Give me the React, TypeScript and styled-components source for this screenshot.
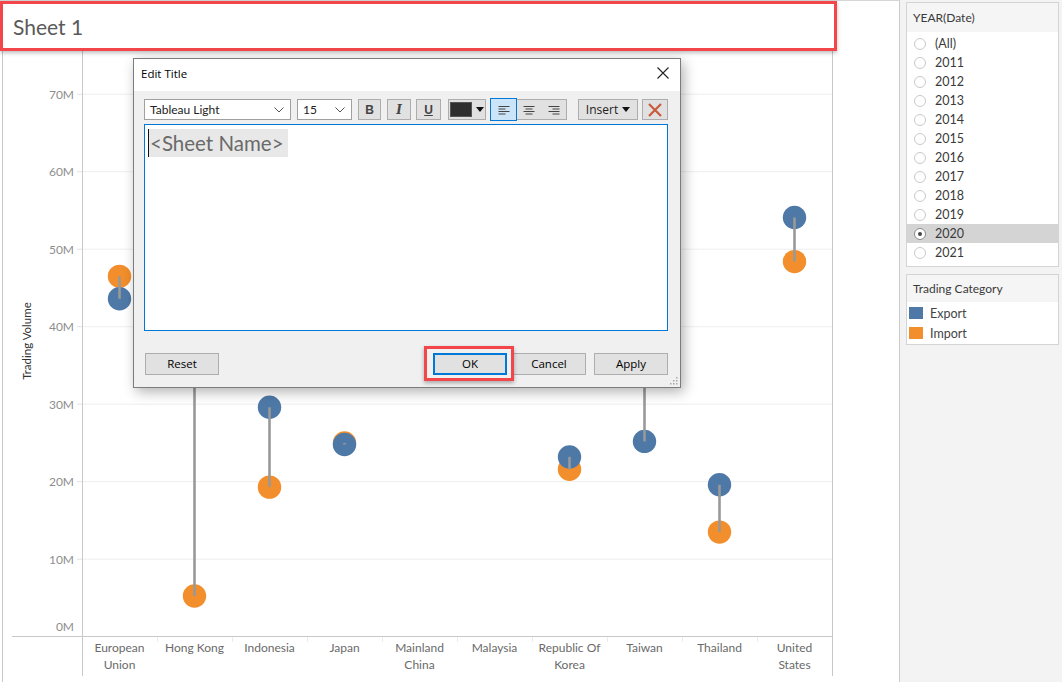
import React from 'react';
import styled, { createGlobalStyle } from 'styled-components';

const GlobalStyle = createGlobalStyle`
  html, body {
    margin: 0;
    padding: 0;
    width: 1062px;
    height: 682px;
    overflow: hidden;
    background: #ffffff;
  }
  body {
    font-family: Lato, "Open Sans", sans-serif;
    color: #333;
  }
  * { box-sizing: border-box; }
`;

const Page = styled.div`
  position: relative;
  display: flex;
  width: 1062px;
  height: 682px;
`;

const Worksheet = styled.div`
  flex: none;
  width: 900px;
  height: 682px;
  display: flex;
  flex-direction: column;
  background: #fff;
  border-top: 1px solid #d6d6d6;
  border-right: 1px solid #cbcbcb;
`;

const TitleRow = styled.div`
  flex: none;
  height: 50px;
`;

const TitleBox = styled.div`
  width: 837px;
  height: 50px;
  border: 3px solid #f2464b;
  background: #fff;
  display: flex;
  align-items: center;
  padding-left: 10px;
  box-shadow: 0 2px 4px rgba(0, 0, 0, 0.25);
  font-family: Lato, sans-serif;
  font-size: 21px;
  color: #5a5a5a;
  position: relative;
  z-index: 1;
`;

const ChartSvg = styled.svg`
  display: block;
  flex: none;
  font-family: Lato, sans-serif;
`;

const SidePanel = styled.div`
  flex: 1;
  background: #f3f3f3;
  padding: 2px 3px 0 6px;
  display: flex;
  flex-direction: column;
  gap: 7px;
`;

const Card = styled.div`
  background: #fff;
  border: 1px solid #d4d4d4;
  display: flex;
  flex-direction: column;
`;

const CardHeader = styled.div<{ $h: number }>`
  height: ${(p) => p.$h}px;
  line-height: ${(p) => p.$h}px;
  background: #f5f5f5;
  padding-left: 6px;
  font-size: 12px;
  color: #3a3a3a;
`;

const List = styled.div<{ $pt: number; $pb: number }>`
  padding: ${(p) => p.$pt}px 0 ${(p) => p.$pb}px;
  display: flex;
  flex-direction: column;
`;

const RadioRow = styled.div<{ $active?: boolean }>`
  height: 19px;
  display: flex;
  align-items: center;
  gap: 9px;
  padding-left: 7px;
  font-size: 12.5px;
  color: #3a3a3a;
  background: ${(p) => (p.$active ? '#d4d4d4' : 'transparent')};
`;

const Radio = styled.span<{ $checked?: boolean }>`
  width: 12px;
  height: 12px;
  border-radius: 50%;
  border: 1px solid ${(p) => (p.$checked ? '#8a8a8a' : '#c9c9c9')};
  background: #fff;
  display: flex;
  align-items: center;
  justify-content: center;
  &::after {
    content: '';
    width: 4px;
    height: 4px;
    border-radius: 50%;
    background: ${(p) => (p.$checked ? '#444' : 'transparent')};
  }
`;

const LegendRow = styled.div`
  height: 20px;
  display: flex;
  align-items: center;
  gap: 7px;
  padding-left: 2px;
  font-size: 12.5px;
  color: #444;
`;

const Swatch = styled.span<{ $color: string }>`
  width: 14px;
  height: 12px;
  background: ${(p) => p.$color};
`;

/* ---------- Dialog ---------- */

const Dialog = styled.div`
  position: absolute;
  left: 133px;
  top: 58px;
  width: 548px;
  height: 330px;
  border: 1px solid #7c7c7c;
  background: #f0f0f0;
  box-shadow: 3px 4px 12px rgba(0, 0, 0, 0.3);
  display: flex;
  flex-direction: column;
  font-family: "Open Sans", "Noto Sans", sans-serif;
  z-index: 2;
`;

const DialogTitleBar = styled.div`
  height: 32px;
  flex: none;
  background: #fff;
  display: flex;
  align-items: center;
  justify-content: space-between;
  padding: 0 11px 4px 7px;
  font-size: 11.5px;
  color: #000;
`;

const DialogBody = styled.div`
  flex: 1;
  display: flex;
  flex-direction: column;
  padding: 8px 12px 0 10px;
`;

const Toolbar = styled.div`
  display: flex;
  height: 21px;
`;

const Select = styled.div<{ $w: number; $ml?: number }>`
  width: ${(p) => p.$w}px;
  margin-left: ${(p) => p.$ml ?? 0}px;
  height: 21px;
  background: #fff;
  border: 1px solid #a0a0a0;
  display: flex;
  align-items: center;
  justify-content: space-between;
  padding: 0 6px 0 5px;
  font-family: Lato, sans-serif;
  font-size: 12px;
  color: #222;
`;

const ToolButton = styled.div<{ $w: number; $ml?: number }>`
  width: ${(p) => p.$w}px;
  margin-left: ${(p) => p.$ml ?? 0}px;
  height: 21px;
  background: #e1e1e1;
  border: 1px solid #adadad;
  display: flex;
  align-items: center;
  justify-content: center;
  gap: 4px;
  font-size: 12px;
  color: #222;
`;

const StyleGlyph = styled.span<{ $kind: 'b' | 'i' | 'u' }>`
  font-family: ${(p) => (p.$kind === 'i' ? '"DejaVu Serif", serif' : '"Liberation Sans", sans-serif')};
  font-weight: bold;
  font-style: ${(p) => (p.$kind === 'i' ? 'italic' : 'normal')};
  text-decoration: ${(p) => (p.$kind === 'u' ? 'underline' : 'none')};
  font-size: 12px;
  color: #444;
`;

const ColorSwatch = styled.span`
  width: 22px;
  height: 15px;
  background: #2e2e2e;
  border: 1px solid #555;
`;

const AlignGroup = styled.div`
  margin-left: 5px;
  width: 76px;
  height: 21px;
  display: flex;
  background: #e1e1e1;
  border: 1px solid #adadad;
`;

const AlignButton = styled.div<{ $active?: boolean }>`
  flex: 1;
  display: flex;
  align-items: center;
  justify-content: center;
  background: ${(p) => (p.$active ? '#cce4f7' : 'transparent')};
  outline: ${(p) => (p.$active ? '1px solid #0078d7' : 'none')};
  margin: ${(p) => (p.$active ? '-1px 0 -1px -1px' : '0')};
  position: relative;
`;

const TextArea = styled.div`
  margin-top: 4px;
  height: 207px;
  background: #fff;
  border: 1px solid #0078d7;
  padding: 4px 0 0 3px;
`;

const Placeholder = styled.span`
  display: inline-block;
  height: 28px;
  line-height: 28px;
  padding: 0 4px 0 1px;
  background: #e8e8e8;
  border-left: 1px solid #111;
  font-family: Lato, sans-serif;
  font-size: 20.5px;
  color: #6a6a6a;
`;

const Footer = styled.div`
  display: flex;
  align-items: center;
  margin-top: 22px;
  padding-left: 1px;
`;

const DialogButton = styled.div<{ $primary?: boolean; $ml?: number }>`
  width: 74px;
  height: 22px;
  margin-left: ${(p) => p.$ml ?? 0}px;
  background: #e1e1e1;
  border: ${(p) => (p.$primary ? '2px solid #0078d7' : '1px solid #adadad')};
  display: flex;
  align-items: center;
  justify-content: center;
  padding-bottom: 1px;
  font-size: 11.5px;
  color: #000;
`;

const Spacer = styled.div`
  flex: 1;
`;

const Highlighted = styled.div`
  position: relative;
`;

const HighlightRing = styled.div`
  position: absolute;
  left: -9px;
  right: -7px;
  top: -7px;
  bottom: -6px;
  border: 3px solid #f2464b;
  box-shadow: 0 2px 4px rgba(0, 0, 0, 0.3);
  pointer-events: none;
`;

const Grip = styled.svg`
  position: absolute;
  right: 2px;
  bottom: 2px;
`;

/* ---------- icons ---------- */

const Chevron = () => (
  <svg width="10" height="6" viewBox="0 0 10 6">
    <path d="M0.5 0.5 L5 5 L9.5 0.5" fill="none" stroke="#555" strokeWidth="1" />
  </svg>
);

const Caret = () => (
  <svg width="8" height="5" viewBox="0 0 8 5">
    <path d="M0 0 H8 L4 5 Z" fill="#111" />
  </svg>
);

const AlignIcon = ({ mode }: { mode: 'l' | 'c' | 'r' }) => {
  const rows = [11, 7, 11, 7];
  return (
    <svg width="12" height="10" viewBox="0 0 12 10">
      {rows.map((w, i) => {
        const x = mode === 'l' ? 0.5 : mode === 'r' ? 11.5 - w : (12 - w) / 2;
        return <rect key={i} x={x} y={1 + i * 2.5} width={w} height={1} fill="#444" />;
      })}
    </svg>
  );
};

const CloseIcon = () => (
  <svg width="12" height="12" viewBox="0 0 12 12">
    <path d="M0.5 0.5 L11.5 11.5 M11.5 0.5 L0.5 11.5" stroke="#222" strokeWidth="1.1" />
  </svg>
);

const RedX = () => (
  <svg width="14" height="14" viewBox="0 0 14 14">
    <path d="M1 1 L13 13 M13 1 L1 13" stroke="#c95a3c" strokeWidth="2.2" />
  </svg>
);

/* ---------- chart ---------- */

const OY = 51;
const yv = (v: number) => 636.7 - 7.75 * v - OY;
const colX = (i: number) => 82 + 75 * i + 37.5;

const countries: { name: string[]; exp: number; imp: number }[] = [
  { name: ['European', 'Union'], exp: 43.6, imp: 46.5 },
  { name: ['Hong Kong'], exp: 62, imp: 5.25 },
  { name: ['Indonesia'], exp: 29.6, imp: 19.3 },
  { name: ['Japan'], exp: 24.8, imp: 25.0 },
  { name: ['Mainland', 'China'], exp: 60, imp: 57 },
  { name: ['Malaysia'], exp: 44, imp: 41 },
  { name: ['Republic Of', 'Korea'], exp: 23.2, imp: 21.6 },
  { name: ['Taiwan'], exp: 25.2, imp: 40 },
  { name: ['Thailand'], exp: 19.6, imp: 13.5 },
  { name: ['United', 'States'], exp: 54.1, imp: 48.4 },
];

const BLUE = '#4e79a7';
const ORANGE = '#f28e2b';

const Chart = () => {
  const ticks = [0, 10, 20, 30, 40, 50, 60, 70];
  return (
    <ChartSvg width={899} height={631} viewBox="0 0 899 631">
      {ticks.slice(1).map((t) => (
        <g key={t}>
          <line x1={82} x2={832} y1={yv(t)} y2={yv(t)} stroke="#eeeeee" strokeWidth={1} />
          <line x1={77} x2={82} y1={yv(t)} y2={yv(t)} stroke="#e2e2e2" strokeWidth={1} />
        </g>
      ))}
      {ticks.map((t) => (
        <text
          key={t}
          x={74}
          y={t === 0 ? 631 - OY : yv(t) + 4.5}
          textAnchor="end"
          fontSize={12}
          fill="#8e8e8e"
        >
          {t}M
        </text>
      ))}
      <text
        x={31}
        y={341 - OY}
        transform={`rotate(-90 31 ${341 - OY})`}
        textAnchor="middle"
        fontSize={11.5}
        fill="#333"
      >
        Trading Volume
      </text>
      <line x1={2.5} x2={2.5} y1={0} y2={631} stroke="#c8c8c8" />
      <line x1={82.5} x2={82.5} y1={0} y2={625} stroke="#c8c8c8" />
      <line x1={832.5} x2={832.5} y1={0} y2={625} stroke="#c8c8c8" />
      <line x1={12} x2={832} y1={585.5} y2={585.5} stroke="#c8c8c8" />
      {Array.from({ length: 9 }, (_, i) => (
        <line
          key={i}
          x1={157.5 + 75 * i}
          x2={157.5 + 75 * i}
          y1={586}
          y2={591}
          stroke="#ececec"
        />
      ))}
      {countries.map((c, i) => (
        <g key={c.name.join(' ')}>
          <circle cx={colX(i)} cy={yv(c.imp)} r={11.7} fill={ORANGE} />
          <circle cx={colX(i)} cy={yv(c.exp)} r={11.7} fill={BLUE} />
          <line
            x1={colX(i)}
            x2={colX(i)}
            y1={yv(c.exp)}
            y2={yv(c.imp)}
            stroke="#999"
            strokeWidth={2.6}
          />
          {c.name.map((n, k) => (
            <text
              key={n}
              x={colX(i)}
              y={601 + k * 17}
              textAnchor="middle"
              fontSize={12}
              fill="#6a6a6a"
            >
              {n}
            </text>
          ))}
        </g>
      ))}
    </ChartSvg>
  );
};

const years = ['(All)', '2011', '2012', '2013', '2014', '2015', '2016', '2017', '2018', '2019', '2020', '2021'];

export default function App() {
  return (
    <>
      <GlobalStyle />
      <Page>
        <Worksheet>
          <TitleRow>
            <TitleBox>Sheet 1</TitleBox>
          </TitleRow>
          <Chart />
        </Worksheet>
        <SidePanel>
          <Card>
            <CardHeader $h={29}>YEAR(Date)</CardHeader>
            <List $pt={2} $pb={4}>
              {years.map((y) => (
                <RadioRow key={y} $active={y === '2020'}>
                  <Radio $checked={y === '2020'} />
                  {y}
                </RadioRow>
              ))}
            </List>
          </Card>
          <Card>
            <CardHeader $h={27}>Trading Category</CardHeader>
            <List $pt={1} $pb={1}>
              <LegendRow>
                <Swatch $color={BLUE} />
                Export
              </LegendRow>
              <LegendRow>
                <Swatch $color={ORANGE} />
                Import
              </LegendRow>
            </List>
          </Card>
        </SidePanel>

        <Dialog>
          <DialogTitleBar>
            <span>Edit Title</span>
            <CloseIcon />
          </DialogTitleBar>
          <DialogBody>
            <Toolbar>
              <Select $w={147}>
                Tableau Light
                <Chevron />
              </Select>
              <Select $w={55} $ml={6}>
                15
                <Chevron />
              </Select>
              <ToolButton $w={23} $ml={6}>
                <StyleGlyph $kind="b">B</StyleGlyph>
              </ToolButton>
              <ToolButton $w={24} $ml={6}>
                <StyleGlyph $kind="i">I</StyleGlyph>
              </ToolButton>
              <ToolButton $w={25} $ml={5}>
                <StyleGlyph $kind="u">U</StyleGlyph>
              </ToolButton>
              <ToolButton $w={38} $ml={7}>
                <ColorSwatch />
                <Caret />
              </ToolButton>
              <AlignGroup>
                <AlignButton $active>
                  <AlignIcon mode="l" />
                </AlignButton>
                <AlignButton>
                  <AlignIcon mode="c" />
                </AlignButton>
                <AlignButton>
                  <AlignIcon mode="r" />
                </AlignButton>
              </AlignGroup>
              <ToolButton $w={60} $ml={11}>
                Insert
                <Caret />
              </ToolButton>
              <ToolButton $w={26} $ml={4}>
                <RedX />
              </ToolButton>
            </Toolbar>
            <TextArea>
              <Placeholder>&lt;Sheet Name&gt;</Placeholder>
            </TextArea>
            <Footer>
              <DialogButton>Reset</DialogButton>
              <Spacer />
              <Highlighted>
                <DialogButton $primary>OK</DialogButton>
                <HighlightRing />
              </Highlighted>
              <DialogButton $ml={5}>Cancel</DialogButton>
              <DialogButton $ml={8}>Apply</DialogButton>
            </Footer>
          </DialogBody>
          <Grip width="9" height="9" viewBox="0 0 9 9">
            {[
              [7, 1],
              [7, 4],
              [4, 4],
              [7, 7],
              [4, 7],
              [1, 7],
            ].map(([x, y]) => (
              <rect key={`${x}-${y}`} x={x} y={y} width={1.5} height={1.5} fill="#a8a8a8" />
            ))}
          </Grip>
        </Dialog>
      </Page>
    </>
  );
}
